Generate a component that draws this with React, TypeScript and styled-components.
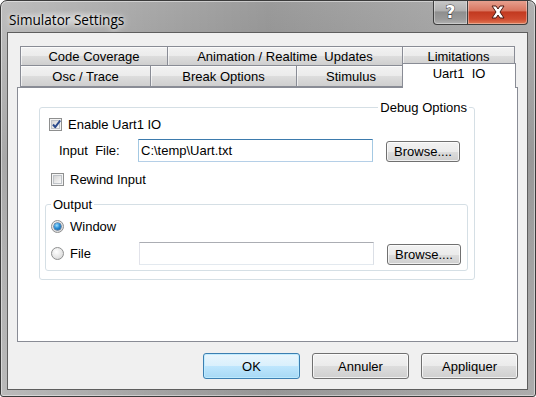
import React from "react";
import styled, { createGlobalStyle } from "styled-components";

const Global = createGlobalStyle`
  html, body { margin: 0; padding: 0; background: #ffffff; }
  body { font-family: "Liberation Sans", Arial, sans-serif; font-size: 13px; color: #000; }
  * { box-sizing: border-box; }
`;

const Window = styled.div`
  width: 536px;
  height: 397px;
  border: 1px solid #3b3b3b;
  border-radius: 7px 7px 3px 3px;
  background:
    linear-gradient(to right, rgba(255,255,255,0.25) 0%, rgba(255,255,255,0) 30%, rgba(0,0,0,0.08) 50%, rgba(255,255,255,0.1) 100%),
    linear-gradient(to bottom, #a8a8a8 0%, #8d8d8d 40%, #9a9a9a 70%, #a3a3a3 100%);
  box-shadow: inset 0 0 0 1px rgba(255,255,255,0.45);
  display: flex;
  flex-direction: column;
  padding: 0 7px 6px 6px;
  overflow: hidden;
`;

const TitleBar = styled.div`
  height: 32px;
  display: flex;
  align-items: flex-start;
  justify-content: space-between;
`;

const TitleText = styled.div`
  font-family: "Open Sans", "Noto Sans", sans-serif;
  font-size: 13.6px;
  color: #000;
  margin: 9px 0 0 -2px;
  padding: 0 4px;
  text-shadow: 0 0 8px rgba(255,255,255,0.9), 0 0 4px rgba(255,255,255,0.8);
  background: radial-gradient(ellipse at center, rgba(235,235,235,0.55) 0%, rgba(235,235,235,0) 70%);
`;

const CaptionButtons = styled.div`
  display: flex;
  margin-top: -1px;
`;

const CapButton = styled.div<{ $w: number; $close?: boolean }>`
  width: ${(p) => p.$w}px;
  height: 25px;
  border: 1px solid #3f3f3f;
  border-top: none;
  display: flex;
  align-items: center;
  justify-content: center;
  box-shadow: inset 0 0 0 1px rgba(255,255,255,0.35);
  background: ${(p) =>
    p.$close
      ? "linear-gradient(to bottom, #e8a493 0%, #d9755f 45%, #c2391f 50%, #cf4a2f 80%, #e07a55 100%)"
      : "linear-gradient(to bottom, #c9c9c9 0%, #b0b0b0 45%, #8e8e8e 50%, #9a9a9a 80%, #b2b2b2 100%)"};
  border-radius: ${(p) => (p.$close ? "0 0 4px 0" : "0 0 0 4px")};
  ${(p) => (p.$close ? "border-left: none;" : "")}
`;

const HelpGlyph = styled.span`
  font-family: "DejaVu Sans", sans-serif;
  font-weight: bold;
  font-size: 17px;
  color: #ffffff;
  -webkit-text-stroke: 1px #3a3a3a;
  paint-order: stroke fill;
  line-height: 1;
  margin-top: 1px;
`;

const Client = styled.div`
  flex: 1;
  background: #f0f0f0;
  border: 1px solid #5e5e5e;
  display: flex;
  flex-direction: column;
  padding: 13px 9px 10px 9px;
`;

const TabControl = styled.div`
  display: flex;
  flex-direction: column;
  width: 501px;
`;

const TabRow = styled.div<{ $front?: boolean }>`
  display: flex;
  align-items: flex-end;
  padding-left: 3px;
  height: ${(p) => (p.$front ? 22 : 20)}px;
  margin-top: ${(p) => (p.$front ? -1 : 0)}px;
  position: relative;
  z-index: ${(p) => (p.$front ? 2 : 1)};
`;

const Tab = styled.div<{ $w: number; $active?: boolean }>`
  width: ${(p) => p.$w}px;
  height: ${(p) => (p.$active ? "25px" : "100%")};
  margin-bottom: ${(p) => (p.$active ? -1 : 0)}px;
  margin-left: ${(p) => (p.$active ? -3 : 0)}px;
  margin-right: -1px;
  border: 1px solid #898c95;
  border-bottom: ${(p) => (p.$active ? "none" : "1px solid #898c95")};
  background: ${(p) =>
    p.$active
      ? "#ffffff"
      : "linear-gradient(to bottom, #f2f2f2 0%, #ebebeb 50%, #dddddd 51%, #cfcfcf 100%)"};
  display: flex;
  align-items: ${(p) => (p.$active ? "flex-start" : "center")};
  justify-content: center;
  padding-top: ${(p) => (p.$active ? 2 : 0)}px;
  font-size: 13px;
  white-space: pre;
  position: relative;
  z-index: ${(p) => (p.$active ? 3 : 1)};
  box-shadow: ${(p) =>
    p.$active ? "none" : "inset 0 1px 0 rgba(255,255,255,0.7), inset 1px 0 0 rgba(255,255,255,0.6)"};
`;

const Panel = styled.div`
  height: 255px;
  background: #ffffff;
  border: 1px solid #898c95;
  padding: 19px 0 0 21px;
  position: relative;
  z-index: 1;
`;

const Group = styled.div<{ $w: number; $h: number; $ml?: number; $mt?: number }>`
  width: ${(p) => p.$w}px;
  height: ${(p) => p.$h}px;
  margin-left: ${(p) => p.$ml ?? 0}px;
  margin-top: ${(p) => p.$mt ?? 0}px;
  border: 1px solid #d5dfe5;
  border-radius: 3px;
  position: relative;
  flex-shrink: 0;
`;

const Legend = styled.span<{ $right?: boolean }>`
  position: absolute;
  top: -8px;
  ${(p) => (p.$right ? "right: 5px;" : "left: 5px;")}
  background: #ffffff;
  padding: 0 2px;
  line-height: 15px;
  font-size: 13px;
`;

const GroupBody = styled.div<{ $pt: number; $pl: number }>`
  display: flex;
  flex-direction: column;
  padding-top: ${(p) => p.$pt}px;
  padding-left: ${(p) => p.$pl}px;
`;

const CheckRow = styled.label<{ $mt?: number; $ml?: number }>`
  display: flex;
  align-items: center;
  height: 15px;
  margin-top: ${(p) => p.$mt ?? 0}px;
  margin-left: ${(p) => p.$ml ?? 0}px;
  gap: 6px;
`;

const CheckBox = styled.span`
  width: 13px;
  height: 13px;
  border: 1px solid #8e8f8f;
  background: #f4f4f4;
  padding: 1px;
  display: flex;
  position: relative;
  &::before {
    content: "";
    flex: 1;
    border: 1px solid #bfc3c8;
    background: linear-gradient(135deg, #d4d4d4 0%, #ebebeb 60%, #f8f8f8 100%);
  }
  svg { position: absolute; left: 0; top: -1px; }
`;

const Radio = styled.span<{ $checked?: boolean }>`
  width: 13px;
  height: 13px;
  flex-shrink: 0;
  border-radius: 50%;
  border: 1px solid #8e8f8f;
  background: radial-gradient(circle at 40% 35%, #ffffff 0%, #e6e6e6 55%, #cfcfcf 100%);
  display: flex;
  align-items: center;
  justify-content: center;
  &::after {
    content: "";
    display: ${(p) => (p.$checked ? "block" : "none")};
    width: 7px;
    height: 7px;
    border-radius: 50%;
    background: radial-gradient(circle at 40% 35%, #9ee0ff 0%, #2c8fd6 45%, #0d4f8c 100%);
    box-shadow: 0 0 0 0.5px #1b3f6a;
  }
`;

const FieldRow = styled.div<{ $mt: number }>`
  display: flex;
  align-items: center;
  margin-top: ${(p) => p.$mt}px;
  height: 23px;
`;

const FieldLabel = styled.span<{ $w: number; $ml?: number }>`
  width: ${(p) => p.$w}px;
  flex-shrink: 0;
  margin-left: ${(p) => p.$ml ?? 0}px;
  display: flex;
  align-items: center;
  gap: 6px;
  white-space: pre;
`;

const TextBox = styled.div<{ $focus?: boolean }>`
  width: 235px;
  height: 23px;
  flex-shrink: 0;
  border: 1px solid ${(p) => (p.$focus ? "#b5cfe7" : "#e3e9ef")};
  border-top-color: ${(p) => (p.$focus ? "#3d7bad" : "#abadb3")};
  border-left-color: ${(p) => (p.$focus ? "#a4c9e3" : "#e2e3ea")};
  border-right-color: ${(p) => (p.$focus ? "#a4c9e3" : "#dbdfe6")};
  background: #ffffff;
  padding: 0 2px;
  display: flex;
  align-items: center;
  white-space: pre;
`;

const SmallButton = styled.div`
  width: 74px;
  height: 21px;
  flex-shrink: 0;
  margin-left: 13px;
  margin-top: 1px;
  border: 1px solid #707070;
  border-radius: 3px;
  background: linear-gradient(to bottom, #f2f2f2 0%, #ebebeb 50%, #dddddd 51%, #cfcfcf 100%);
  box-shadow: inset 0 0 0 1px rgba(255,255,255,0.7);
  display: flex;
  align-items: center;
  justify-content: center;
`;

const ButtonBar = styled.div`
  display: flex;
  justify-content: flex-end;
  gap: 12px;
  margin-top: 11px;
  width: 501px;
`;

const DialogButton = styled.div<{ $default?: boolean }>`
  width: 97px;
  height: 26px;
  border: 1px solid ${(p) => (p.$default ? "#3c7fb1" : "#707070")};
  border-radius: 3px;
  background: ${(p) =>
    p.$default
      ? "linear-gradient(to bottom, #eaf6fd 0%, #d9f0fc 50%, #bee6fd 51%, #a7d9f5 100%)"
      : "linear-gradient(to bottom, #f2f2f2 0%, #ebebeb 50%, #dddddd 51%, #cfcfcf 100%)"};
  box-shadow: inset 0 0 0 1px ${(p) => (p.$default ? "rgba(190,235,255,0.9)" : "rgba(255,255,255,0.7)")};
  display: flex;
  align-items: center;
  justify-content: center;
  font-size: 13px;
`;

const CheckMark = () => (
  <svg width="13" height="13" viewBox="0 0 13 13">
    <path d="M3 6.5 L5.2 9.2 L10.2 2.5" fill="none" stroke="#2a4a8c" strokeWidth="2" strokeLinejoin="round" />
  </svg>
);

const CloseGlyph = () => (
  <svg width="18" height="14" viewBox="0 0 18 14">
    <path
      d="M3 1 H7 L9 4 L11 1 H15 L11 7 L15 13 H11 L9 10 L7 13 H3 L7 7 Z"
      fill="#ffffff"
      stroke="#4a1a12"
      strokeWidth="1"
      strokeLinejoin="round"
    />
  </svg>
);

export default function App() {
  return (
    <>
      <Global />
      <Window>
        <TitleBar>
          <TitleText>Simulator Settings</TitleText>
          <CaptionButtons>
            <CapButton $w={35}>
              <HelpGlyph>?</HelpGlyph>
            </CapButton>
            <CapButton $w={60} $close>
              <CloseGlyph />
            </CapButton>
          </CaptionButtons>
        </TitleBar>
        <Client>
          <TabControl>
            <TabRow>
              <Tab $w={148}>Code Coverage</Tab>
              <Tab $w={236}>Animation / Realtime  Updates</Tab>
              <Tab $w={113}>Limitations</Tab>
            </TabRow>
            <TabRow $front>
              <Tab $w={131}>Osc / Trace</Tab>
              <Tab $w={147}>Break Options</Tab>
              <Tab $w={110}>Stimulus</Tab>
              <Tab $w={114} $active>Uart1  IO</Tab>
            </TabRow>
            <Panel>
              <Group $w={436} $h={173}>
                <Legend $right>Debug Options</Legend>
                <GroupBody $pt={9} $pl={9}>
                  <CheckRow>
                    <CheckBox>
                      <CheckMark />
                    </CheckBox>
                    Enable Uart1 IO
                  </CheckRow>
                  <FieldRow $mt={7}>
                    <FieldLabel $w={79} $ml={10}>Input  File:</FieldLabel>
                    <TextBox $focus>C:\temp\Uart.txt</TextBox>
                    <SmallButton>Browse....</SmallButton>
                  </FieldRow>
                  <CheckRow $mt={10} $ml={2}>
                    <CheckBox />
                    Rewind Input
                  </CheckRow>
                  <Group $w={423} $h={67} $ml={-4} $mt={17}>
                    <Legend>Output</Legend>
                    <GroupBody $pt={14} $pl={5}>
                      <CheckRow>
                        <Radio $checked />
                        Window
                      </CheckRow>
                      <FieldRow $mt={8}>
                        <FieldLabel $w={88}>
                          <Radio />
                          File
                        </FieldLabel>
                        <TextBox />
                        <SmallButton>Browse....</SmallButton>
                      </FieldRow>
                    </GroupBody>
                  </Group>
                </GroupBody>
              </Group>
            </Panel>
          </TabControl>
          <ButtonBar>
            <DialogButton $default>OK</DialogButton>
            <DialogButton>Annuler</DialogButton>
            <DialogButton>Appliquer</DialogButton>
          </ButtonBar>
        </Client>
      </Window>
    </>
  );
}
